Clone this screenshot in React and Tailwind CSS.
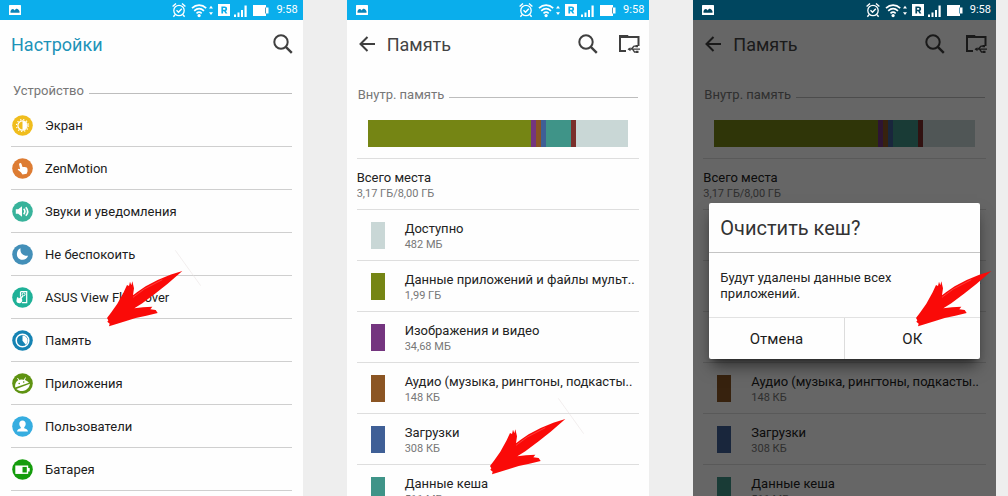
import React from "react";

function StatusIcons() {
  return (
    <svg width="98" height="16" viewBox="0 0 98 16" fill="none" stroke="white" aria-hidden="true">
      <circle cx="7" cy="8.5" r="5.2" strokeWidth="1.3" />
      <path d="M.6 4.4 4 1.400M13.400 4.400 10 1.400M3 12.800 1.400 14.800M11 12.800l1.600 2M4.500 8.300l2 2 3.300-3.600" strokeWidth="1.400" />
      <path d="M20 6.200c4.200-4 10-4 14.200 0M22.200 8.800c3-2.600 6.800-2.600 9.800 0M24.500 11.300c1.700-1.400 3.500-1.400 5.200 0" strokeWidth="1.700" />
      <circle cx="27.100" cy="13.600" r="1.600" fill="white" stroke="none" />
      <path d="M37 6.600 39 3.800l2 2.800ZM37 10.200l2 2.800 2-2.800Z" fill="white" stroke="none" />
      <path fillRule="evenodd" d="M46 2h12v12H46ZM49.400 4.500v7h1.700V9.200h1l1.400 2.300h1.900l-1.600-2.600c.8-.3 1.300-1 1.300-2 0-1.600-1-2.400-2.600-2.400ZM51.100 5.900h1.200c.8 0 1.100.3 1.100.9s-.3 1-1.100 1h-1.200Z" fill="white" stroke="none" />
      <path d="M62 12.500h2V15h-2ZM65.500 10.500h2V15h-2ZM69 8h2v7h-2ZM72.500 3.500h2.200V15h-2.200Z" fill="white" stroke="none" />
      <path d="M81 3h13v2.500h2.500v6H94V14H81Z" fill="white" stroke="none" />
      <path d="M93.500 5.500v6" stroke="#0a6f9c" strokeWidth=".7" />
    </svg>
  );
}

function StatusBar({ dim }) {
  return (
    <div className={`flex h-5 shrink-0 items-center justify-between pl-[9px] pr-[5px] ${dim ? "bg-[#00465f]" : "bg-[#0aaeec]"}`}>
      <svg width="12" height="10" viewBox="0 0 12 10" aria-hidden="true">
        <rect width="12" height="10" rx=".6" fill="white" />
        <path d="M1.500 7.800V6.300C2.500 3.500 4.500 3.400 5.600 5.600 6.800 3 9.300 3 10.500 6.300v1.500Z" fill={dim ? "#00465f" : "#0a84b8"} />
      </svg>
      <div className="flex items-center gap-1.5">
        <StatusIcons />
        <span className="text-[11px] text-white">9:58</span>
      </div>
    </div>
  );
}

function SearchButton() {
  return (
    <button type="button" aria-label="Поиск" className="flex">
      <svg width="20" height="20" viewBox="0 0 20 20" fill="none" stroke="#3f3f3f" aria-hidden="true">
        <circle cx="8" cy="8" r="6.700" strokeWidth="2" />
        <path d="m12.800 12.800 6 6" strokeWidth="2.400" />
      </svg>
    </button>
  );
}

function SectionTitle({ children, className }) {
  return (
    <div className={`flex h-5 items-center gap-[5px] ${className}`}>
      <h2 className="pt-0.5 text-[13px] leading-5 text-[#777]">{children}</h2>
      <span className="mt-1.5 h-px flex-1 bg-[#bdbdbd]" />
    </div>
  );
}

function Arrow({ className, trace }) {
  return (
    <svg className={`pointer-events-none absolute ${className}`} width="94" height="78" viewBox="0 0 282 234" aria-hidden="true">
      {trace && <path d="M205 4 281 110" stroke="#e6dede" strokeWidth="1.500" />}
      <g transform="translate(0 66)">
        <path
          fill="#fa0a08"
          d="M226 0 190 11 152 27 116 46 92 62 78 73 81 52 76 31 73 43 69 32 66 45 60 42 50 64 31 98 13 124 0 141 4 148 1 152 8 158 6 166 21 161 55 151 86 141 118 134 152 126 146 117 130 115 136 107 108 109 82 112 106 97 146 67 182 38Z"
        />
        <path d="M78 79 112 54 166 26" fill="none" stroke="#ff8a86" strokeWidth="1.200" />
      </g>
    </svg>
  );
}

const glyphs = {
  screen: (
    <>
      <circle cx="10.500" cy="10.500" r="4.600" fill="none" stroke="white" strokeWidth="1.200" />
      <path d="M10.500 6v9a4.500 4.500 0 0 0 0-9Z" fill="white" />
      <circle cx="10.500" cy="10.500" r="6" fill="none" stroke="white" strokeWidth="1.200" strokeDasharray="1.200 1.940" />
    </>
  ),
  motion: (
    <path
      fill="white"
      d="M7.700 5.200c.8-.5 1.500-.1 1.800.7l1 3 2.200.1c1.800.1 2.700.8 2.800 2.200l.1 2-.9 2.500-4.200.7-1.600-2.200-3.200-2.500c.3-1.200 1.500-1.100 2.500-.4L7.100 6.600c-.2-.6 0-1.100.6-1.400Z"
    />
  ),
  sound: (
    <>
      <path d="M3.800 8.300h2.400L10 5.300v10.400l-3.800-3H3.800Z" fill="white" />
      <path d="M11.700 7.800c1.300 1.500 1.300 3.900 0 5.400M13.800 6.200c2.300 2.600 2.300 6 0 8.600" fill="none" stroke="white" strokeWidth="1.600" />
    </>
  ),
  moon: <path d="M8.600 4.300c-.9 4.400 2.500 8.200 7.500 7.400-1 2.700-3.200 4.300-5.900 4.100-3.200-.2-5.500-2.700-5.300-6 .1-2.600 1.500-4.600 3.700-5.500Z" fill="white" />,
  cover: (
    <>
      <path d="M8.500 4.700h6.200v11H10M8.500 4.700v5" fill="none" stroke="white" strokeWidth="1.200" />
      <circle cx="11.600" cy="7.300" r="1.500" fill="none" stroke="white" strokeWidth="1" />
      <path d="M5 10.500c1-.6 1.700.3 1.800 1l3.500-2.800c1 .3.900 1 .3 1.600l-1 1.500c1.300 1.200.7 3.600-1 4.200-2 .5-3.800-.1-4.200-2Z" fill="white" />
    </>
  ),
  memory: (
    <>
      <circle cx="10.500" cy="10.500" r="6.300" fill="none" stroke="white" strokeWidth="1.500" />
      <path d="M10.500 5.500v5.200l3.300 4c3.700-3.300 1.700-9-3.300-9.200Z" fill="white" />
    </>
  ),
  apps: (
    <>
      <path d="M3.200 14.500c-.7-4.500 2-8 6.200-8 3 0 5.500 1 7.600 3.300Z" fill="white" />
      <path d="M5.500 5 7 7.500M13.500 4.500 12.400 7" stroke="white" strokeWidth="1" />
      <path d="M4.300 16 17.900 10.800c-.2 3.600-3.400 6.900-7.400 7.200-2.600.1-4.700-.6-6.200-2Z" fill="white" />
      <circle cx="7.200" cy="10.500" r=".8" fill="#5f9312" />
      <circle cx="11.700" cy="9" r=".8" fill="#5f9312" />
    </>
  ),
  users: (
    <path
      fill="white"
      d="M10.500 4.500c2 0 3.200 1.400 3.200 3.300 0 1.500-.6 2.700-1.500 3.400v1c1.800.5 3.600 1 3.800 3.300H5c.2-2.300 2-2.800 3.800-3.300v-1c-.9-.7-1.500-1.900-1.500-3.400 0-1.900 1.200-3.300 3.200-3.300Z"
    />
  ),
  battery: (
    <>
      <rect x="4" y="7.200" width="11.500" height="7" fill="none" stroke="white" strokeWidth="1.400" />
      <path d="M16 9h1.700v3.400H16ZM4 7h6.500v7.400H4Z" fill="white" />
    </>
  ),
};

const settings = [
  ["Экран", "#f0bd1d", "screen"],
  ["ZenMotion", "#dd7c33", "motion"],
  ["Звуки и уведомления", "#38b39b", "sound"],
  ["Не беспокоить", "#438fb8", "moon"],
  ["ASUS View Flip Cover", "#1fb198", "cover"],
  ["Память", "#1583b3", "memory"],
  ["Приложения", "#5f9312", "apps"],
  ["Пользователи", "#36ade0", "users"],
  ["Батарея", "#149c0c", "battery"],
];

function SettingsScreen() {
  return (
    <section className="relative flex min-w-0 flex-col overflow-hidden bg-[#fefefe]">
      <StatusBar />
      <header className="flex h-12 shrink-0 items-center justify-between pl-[11px] pr-[10px]">
        <h1 className="pt-0.5 text-lg text-[#1d93b8]">Настройки</h1>
        <SearchButton />
      </header>
      <SectionTitle className="mt-3 ml-[13px] mr-[11px]">Устройство</SectionTitle>
      <ul className="mx-[11px] mt-1">
        {settings.map(([name, color, glyph]) => (
          <li key={name} className="border-b border-[#cfcfcf]">
            <button type="button" className="flex h-[42px] w-full items-center gap-3 pl-px text-left text-[13px] text-[#1c1c1c]">
              <svg width="21" height="21" viewBox="0 0 21 21" aria-hidden="true">
                <circle cx="10.500" cy="10.500" r="10.300" fill={color} />
                {glyphs[glyph]}
              </svg>
              <span className="pt-0.5">{name}</span>
            </button>
          </li>
        ))}
      </ul>
      <Arrow className="left-[107px] top-[249px]" trace />
    </section>
  );
}

const storage = [
  ["Доступно", "482 МБ", "bg-[#c9d7d6]"],
  ["Данные приложений и файлы мульт..", "1,99 ГБ", "bg-[#758514]"],
  ["Изображения и видео", "34,68 МБ", "bg-[#74357f]"],
  ["Аудио (музыка, рингтоны, подкасты..", "148 КБ", "bg-[#8b5523]"],
  ["Загрузки", "308 КБ", "bg-[#3f5f96]"],
  ["Данные кеша", "511 МБ", "bg-[#3f9488]"],
];

function UsageBar() {
  return (
    <div className="mx-[21px] mt-4 flex h-[27px] shrink-0" role="img" aria-label="Использование памяти">
      <span className="flex-1 bg-[#758514]" />
      <span className="w-[5px] bg-[#74357f]" />
      <span className="w-[5px] bg-[#8b5523]" />
      <span className="w-[5px] bg-[#3f5f96]" />
      <span className="w-[25px] bg-[#3f9488]" />
      <span className="w-[5px] bg-[#7a2f2b]" />
      <span className="w-[52px] bg-[#c9d7d6]" />
    </div>
  );
}

function MemoryScreen({ dim, children }) {
  return (
    <section className="relative flex min-w-0 flex-col overflow-hidden bg-[#fefefe]">
      <StatusBar dim={dim} />
      <div className="relative flex min-h-0 flex-1 flex-col overflow-hidden">
        <header className="flex h-12 shrink-0 items-center pl-3 pr-[9px]">
          <button type="button" aria-label="Назад" className="flex">
            <svg width="16" height="16" viewBox="0 0 16 16" fill="none" stroke="#3f3f3f" strokeWidth="2" aria-hidden="true">
              <path d="M16 8H1.500M8.500 1 1.500 8l7 7" />
            </svg>
          </button>
          <h1 className="ml-3 flex-1 pt-0.5 text-lg text-[#444]">Память</h1>
          <SearchButton />
          <button type="button" aria-label="USB-накопитель" className="ml-5 flex">
            <svg width="22" height="20" viewBox="0 0 22 20" fill="none" stroke="#3f3f3f" aria-hidden="true">
              <path d="M8 17H2V3h18.500v9" strokeWidth="2" />
              <path d="M1 1h9l1.500 3H1Z" fill="#3f3f3f" stroke="none" />
              <path d="M10.500 15.200H22M13 15.200l3-3h2.500M14.500 15.200l2 2.800h2.500" strokeWidth="1.300" />
              <path d="m9.500 15.200 3-2v4ZM17.500 11h2.500v2.300h-2.500ZM18 16.800h2.500v2.300H18Z" fill="#3f3f3f" stroke="none" />
            </svg>
          </button>
        </header>
        <SectionTitle className="mt-4 mx-[11px]">Внутр. память</SectionTitle>
        <UsageBar />
        <div className="mx-[10px] mt-[11px] border-t border-[#dedede] pt-[11px] pb-[7px]">
          <p className="text-[13px] leading-4 text-[#222]">Всего места</p>
          <p className="text-[11px] leading-4 text-[#777]">3,17 ГБ/8,00 ГБ</p>
        </div>
        <ul className="mx-[10px]">
          {storage.map(([name, size, color]) => (
            <li key={name} className="border-t border-[#dedede]">
              <button type="button" className="flex h-[50px] w-full items-center gap-5 pl-[14px] text-left">
                <span className={`h-[27px] w-[14px] shrink-0 ${color}`} />
                <span className="flex flex-col whitespace-nowrap pt-[3px]">
                  <span className="text-[13px] leading-4 text-[#222]">{name}</span>
                  <span className="text-[11px] leading-4 text-[#777]">{size}</span>
                </span>
              </button>
            </li>
          ))}
        </ul>
        {dim && <div className="absolute inset-0 bg-black/60" />}
      </div>
      {children}
    </section>
  );
}

function ClearCacheDialog() {
  return (
    <div
      role="dialog"
      aria-modal="true"
      aria-labelledby="clear-title"
      className="absolute inset-x-4 top-[203px] rounded-xs bg-[#fefefe] shadow-lg shadow-black/50"
    >
      <h2 id="clear-title" className="border-b border-[#c4c4c4] px-[11px] pt-[11px] pb-2.5 text-xl leading-7 text-[#333]">
        Очистить кеш?
      </h2>
      <p className="px-[11px] pt-[17px] pb-[15px] text-[13px] leading-4 text-[#222]">
        Будут удалены данные всех
        <br />
        приложений.
      </p>
      <div className="grid h-[42px] grid-cols-2 divide-x divide-[#dcdcdc] border-t border-[#e2e2e2] text-[15px] text-[#1c1c1c]">
        <button type="button" className="pt-0.5">Отмена</button>
        <button type="button" className="pt-0.5">ОК</button>
      </div>
    </div>
  );
}

export default function App() {
  return (
    <main className="grid h-screen grid-cols-3 gap-11 overflow-hidden bg-[#eeeeee] pr-3 font-[Roboto,'Noto_Sans',sans-serif]">
      <SettingsScreen />
      <MemoryScreen>
        <Arrow className="left-[143px] top-[397px]" trace />
      </MemoryScreen>
      <div className="relative grid min-w-0">
        <MemoryScreen dim>
          <ClearCacheDialog />
        </MemoryScreen>
        <Arrow className="left-[223px] top-[249px]" />
      </div>
    </main>
  );
}
